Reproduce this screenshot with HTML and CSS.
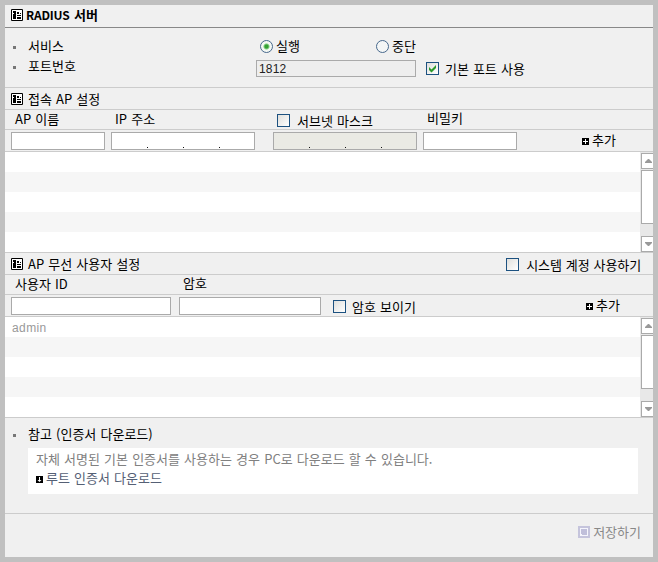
FILE: index.html
```html
<!DOCTYPE html>
<html lang="ko">
<head>
<meta charset="utf-8">
<title>RADIUS 서버</title>
<link rel="stylesheet" href="styles.css">
</head>
<body>
<svg class="defs" width="0" height="0" aria-hidden="true">
  <symbol id="panel" viewBox="0 0 12 12"><path fill="#fff" d="M0 0h12v12H0z"/><path d="M.5.5h11v11H.5z" fill="none" stroke="#000"/><path d="M2 2h3v2H2zM3 4h2v1H3zM2 5h3v5H2zM6 3h2v2H6zM6 6h4v1H6zM6 8h4v2H6zM9 4h1v1H9z"/></symbol>
  <symbol id="plus" viewBox="0 0 7 7"><path d="M0 0h7v7H0z"/><path fill="#fff" d="M3 1h1v2h2v1H4v2H3V4H1V3h2z"/></symbol>
  <symbol id="down" viewBox="0 0 7 7"><path d="M0 0h7v7H0z"/><path fill="#fff" d="M3 1h1v3h1.500L3.500 6 1.500 4H3z"/></symbol>
  <symbol id="save" viewBox="0 0 12 12"><path fill="#c5c4dc" d="M0 0h12v12H0z"/><path fill="#f5f5fc" d="M2 2h8v8H2z"/><path fill="#c0bfda" d="M3 3h6v6H4V8H3z"/></symbol>
  <symbol id="up-arrow" viewBox="0 0 7 4"><path fill="#999" d="M3 0h1l3 3v1H0V3z"/></symbol>
  <symbol id="down-arrow" viewBox="0 0 7 4"><path fill="#999" d="M0 0h7v1L4 4H3L0 1z"/></symbol>
</svg>
<main class="window">
  <header class="title"><svg class="icon"><use href="#panel"/></svg><h1><span class="latin">RADIUS</span> 서버</h1></header>

  <section class="service">
    <div class="line service-line">
      <i class="bullet"></i><span class="name">서비스</span>
      <i class="radio on"></i><span class="run">실행</span>
      <i class="radio"></i><span class="stop">중단</span>
    </div>
    <div class="line port-line">
      <i class="bullet"></i><span class="name">포트번호</span>
      <div class="field port">1812</div>
      <i class="check"><svg viewBox="0 0 11 11"><path d="M2 4v3l2.500 2.500L9 5V2L4.500 6.500z" fill="#2b9a2b"/></svg></i><span class="default-port">기본 포트 사용</span>
    </div>
  </section>

  <header class="section-head"><svg class="icon"><use href="#panel"/></svg><h2>접속 AP 설정</h2></header>
  <div class="labels ap-labels">
    <span class="ap-name">AP 이름</span><span>IP 주소</span>
    <span class="mask-label"><i class="check"></i><span>서브넷 마스크</span></span><span class="key">비밀키</span>
  </div>
  <div class="inputs ap-inputs">
    <div class="field"></div>
    <div class="field octets"><i></i><i></i><i></i></div>
    <div class="field octets off"><i></i><i></i><i></i></div>
    <div class="field"></div>
    <div class="add"><svg><use href="#plus"/></svg><span>추가</span></div>
  </div>
  <div class="list">
    <div class="rows"><p></p><p></p><p></p><p></p><p></p></div>
    <div class="scroll"><b><svg><use href="#up-arrow"/></svg></b><div class="thumb"></div><b><svg><use href="#down-arrow"/></svg></b></div>
  </div>

  <header class="section-head"><svg class="icon"><use href="#panel"/></svg><h2>AP 무선 사용자 설정</h2><div class="system"><i class="check"></i><span>시스템 계정 사용하기</span></div></header>
  <div class="labels user-labels"><span>사용자 ID</span><span class="pw">암호</span></div>
  <div class="inputs user-inputs">
    <div class="field"></div>
    <div class="field"></div>
    <div class="show"><i class="check"></i><span>암호 보이기</span></div>
    <div class="add"><svg><use href="#plus"/></svg><span>추가</span></div>
  </div>
  <div class="list">
    <div class="rows"><p>admin</p><p></p><p></p><p></p><p></p></div>
    <div class="scroll"><b><svg><use href="#up-arrow"/></svg></b><div class="thumb"></div><b><svg><use href="#down-arrow"/></svg></b></div>
  </div>

  <section class="notes">
    <div class="line"><i class="bullet"></i><span class="name">참고 (인증서 다운로드)</span></div>
    <div class="box">
      <p class="hint">자체 서명된 기본 인증서를 사용하는 경우 PC로 다운로드 할 수 있습니다.</p>
      <p class="link"><svg><use href="#down"/></svg><span>루트 인증서 다운로드</span></p>
    </div>
  </section>
  <footer><svg class="icon"><use href="#save"/></svg><span>저장하기</span></footer>
</main>
</body>
</html>
```
FILE: styles.css
```css
* { box-sizing: border-box; }
body { margin: 0; background: #c0c0c0; color: #000; font: 400 13px/16px "Noto Sans CJK KR", sans-serif; word-spacing: .5px; white-space: nowrap; }
h1, h2, p { margin: 0; font: inherit; }
svg { display: block; flex: none; }
.defs { position: absolute; }
.window { width: 648px; height: 552px; margin: 5px; background: #f0f0f0; overflow: hidden; }
.icon { width: 12px; height: 12px; }

.title { display: flex; height: 23px; padding: 4px 0 0 6px; border-bottom: 1px solid #888; }
.title h1 { margin: -2px 0 0 3px; font-weight: 700; font-size: 13px; word-spacing: 1px; }
.latin { font-size: 12px; letter-spacing: -.2px; }

.service { height: 60px; padding-top: 10px; border-bottom: 1px solid #ccc; }
.line { display: flex; align-items: flex-start; }
.bullet { flex: none; width: 3px; height: 3px; margin: 8px 12px 0 8px; background: #777; }
.service-line { height: 21px; }
.name { flex: none; }
.service-line .name { width: 232px; }
.radio { flex: none; width: 13px; height: 13px; margin-top: 2px; border: 1px solid #47688c; border-radius: 50%; background: #f4f6f6; }
.radio.on { background: radial-gradient(circle, #35a035 0 1.500px, #7fce7f 2.500px, #f4f8f4 3.500px); }
.run { width: 100px; margin-left: 3px; }
.stop { margin-left: 3px; }
.port-line .name { width: 228px; margin-top: -1px; }
.port-line .bullet { margin-top: 7px; }
.field { height: 18px; border: 1px solid #aaa; background: #fff; }
.port { width: 160px; height: 17px; margin-top: 1px; padding-left: 2px; background: #eee; color: #222; font: 12px/17px "Liberation Sans", sans-serif; letter-spacing: .2px; }
.check { flex: none; display: block; width: 13px; height: 13px; border: 1px solid #1c5180; background: linear-gradient(135deg, #dfdfdc, #fff); }
.check svg { width: 11px; height: 11px; }
.port-line .check { margin: 3px 0 0 10px; }
.default-port { margin: 2px 0 0 6px; }

.section-head { display: flex; height: 22px; padding: 5px 0 0 6px; border-bottom: 1px solid #ccc; }
.section-head h2 { margin: -2px 0 0 5px; }
.system { display: flex; margin: 0 12px 0 auto; }
.system span { margin: -1px 0 0 7px; letter-spacing: -.1px; }

.labels { display: grid; height: 20px; padding-top: 1px; border-bottom: 1px solid #ccc; }
.ap-labels { grid-template-columns: 100px 162px 150px auto; padding-left: 10px; }
.mask-label { display: flex; }
.mask-label .check { margin-top: 3px; }
.mask-label span { margin: 2px 0 0 7px; }
.key { margin-top: -1px; }
.user-labels { grid-template-columns: 168px auto; padding-left: 10px; }
.pw { margin-top: -1px; }

.inputs { display: grid; height: 22px; padding: 2px 0 0 6px; border-bottom: 1px solid #ccc; }
.ap-inputs { grid-template-columns: 94px 144px 144px 94px auto; column-gap: 6px; }
.ap-inputs .off { background: #eaeae4; }
.ap-inputs .octets:nth-child(3) { margin-left: 12px; margin-right: -12px; }
.ap-inputs .field:nth-child(4) { margin-left: 12px; margin-right: -12px; }
.octets { display: flex; align-items: flex-end; padding: 0 0 1px 35px; gap: 35px; }
.octets i { width: 1px; height: 1px; background: #111; }
.add { display: flex; }
.add svg { width: 7px; height: 7px; margin-top: 6px; }
.add span { margin-left: 3px; }
.ap-inputs .add { margin-left: 71px; }
.user-inputs { grid-template-columns: 160px 142px 245px auto; column-gap: 8px; }
.show { display: flex; margin-left: 4px; }
.show .check { margin-top: 3px; }
.show span { margin: 2px 0 0 6px; }
.user-inputs .add { margin-left: 4px; }

.list { display: flex; height: 101px; border-bottom: 1px solid #ccc; background: #fff; }
.rows { width: 635px; }
.rows p { height: 20px; padding-left: 7px; color: #999; font: 12px/22px "Liberation Sans", sans-serif; letter-spacing: .4px; }
.rows p:nth-child(even) { background: #f6f6f6; }
.scroll { display: flex; flex-direction: column; width: 13px; padding: 1px 0 0 1px; background: #e8e8e8; }
.scroll b { height: 16px; padding: 5px 0 0 3px; border: 1px solid #aaa; border-right: 0; background: #fff; }
.scroll b svg { width: 7px; height: 4px; }
.scroll b:last-child { margin-top: auto; }
.thumb { height: 54px; margin-top: 1px; border: 1px solid #aaa; border-right: 0; background: #fff; }

.notes { height: 96px; padding-top: 8px; border-bottom: 1px solid #ccc; }
.box { width: 610px; height: 46px; margin: 6px 0 0 23px; padding: 3px 8px; background: #fff; }
.hint { color: #808080; }
.link { display: flex; margin-top: 3px; color: #556075; }
.link svg { width: 7px; height: 7px; margin-top: 6px; }
.link span { margin-left: 3px; }

footer { display: flex; justify-content: flex-end; padding: 12px 12px 0 0; color: #888; }
footer span { margin: -2px 0 0 3px; }
```
